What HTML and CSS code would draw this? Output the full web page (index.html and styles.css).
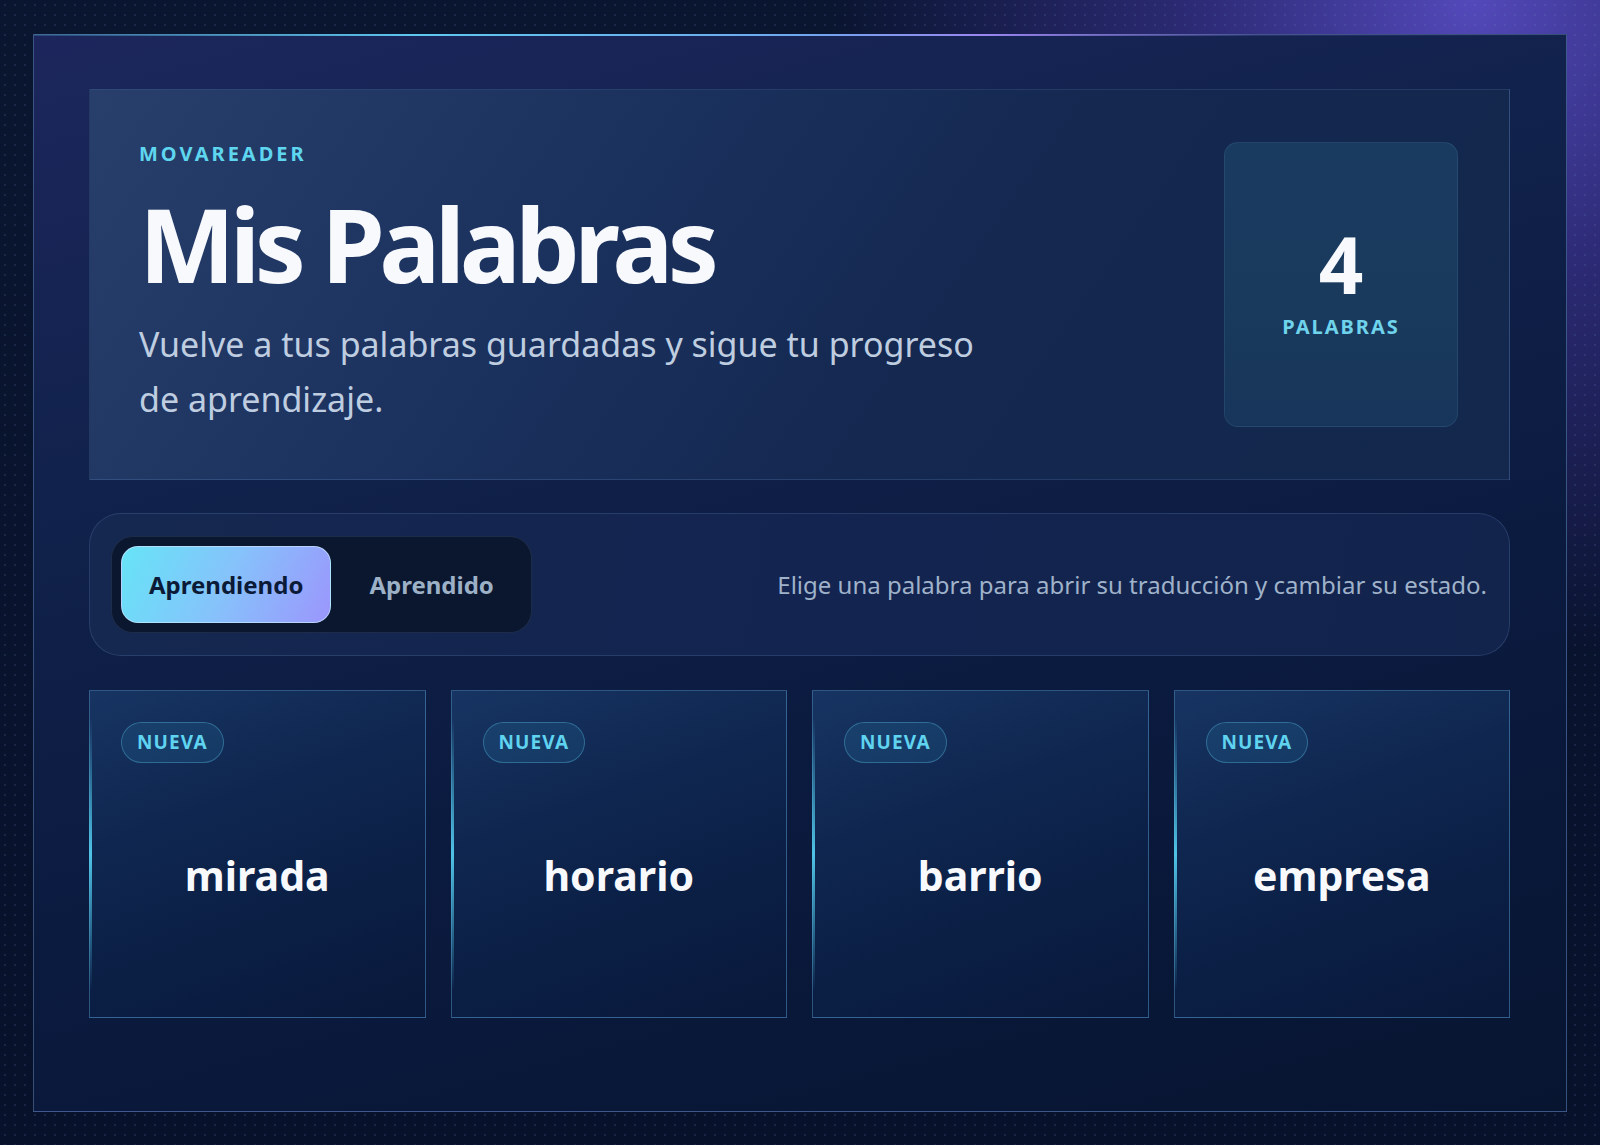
FILE: index.html
```html
<!DOCTYPE html>
<html lang="es">
<head>
    <meta charset="UTF-8">
    <meta name="viewport" content="width=device-width, initial-scale=1.0">
    <title>Mis Palabras - MovaReader</title>
    <link rel="stylesheet" href="styles.css">
</head>
<body>
    <div class="shell">
        <section class="hero">
            <div class="hero-text">
                <div class="eyebrow">MOVAREADER</div>
                <h1>Mis Palabras</h1>
                <p class="lead">Vuelve a tus palabras guardadas y sigue tu progreso de aprendizaje.</p>
            </div>
            <div class="stat-box">
                <div class="stat-num">4</div>
                <div class="stat-label">PALABRAS</div>
            </div>
        </section>

        <section class="toolbar">
            <div class="tabs">
                <button class="tab active">Aprendiendo</button>
                <button class="tab">Aprendido</button>
            </div>
            <p class="hint">Elige una palabra para abrir su traducción y cambiar su estado.</p>
        </section>

        <section class="cards">
            <div class="card">
                <span class="badge">NUEVA</span>
                <div class="word">mirada</div>
            </div>
            <div class="card">
                <span class="badge">NUEVA</span>
                <div class="word">horario</div>
            </div>
            <div class="card">
                <span class="badge">NUEVA</span>
                <div class="word">barrio</div>
            </div>
            <div class="card">
                <span class="badge">NUEVA</span>
                <div class="word">empresa</div>
            </div>
        </section>
    </div>
</body>
</html>
```

FILE: styles.css
```css
* {
    box-sizing: border-box;
}
html, body {
    height: 100%;
}
body {
    margin: 0;
    padding: 34px 33px 33px;
    font-family: "Noto Sans", "Open Sans", sans-serif;
    color: #f4f7fc;
    background-color: #071129;
    background-image:
        radial-gradient(circle, rgba(110, 140, 200, 0.16) 1px, transparent 1.6px),
        radial-gradient(ellipse 40% 58% at 92% 0%, rgba(96, 82, 210, 0.85), rgba(75, 62, 180, 0.5) 45%, transparent 100%),
        linear-gradient(180deg, #0a1530 0%, #07112a 100%);
    background-size: 10px 10px, 100% 100%, 100% 100%;
}
.shell {
    position: relative;
    min-height: calc(100vh - 67px);
    padding: 54px 56px 60px 55px;
    display: flex;
    flex-direction: column;
    gap: 33px;
    border: 1px solid rgba(110, 150, 205, 0.45);
    background: linear-gradient(165deg, #1c265c 0%, #11224c 30%, #0b1b40 60%, #071531 100%);
}
.shell::before {
    content: "";
    position: absolute;
    top: -1px;
    left: 0;
    right: 0;
    height: 2px;
    background: linear-gradient(90deg, rgba(90, 200, 240, 0.2) 0%, #5fc8ee 25%, #6fa8ee 50%, #9a86f0 62%, rgba(120, 110, 220, 0.2) 80%, transparent 100%);
}

/* hero */
.hero {
    display: flex;
    justify-content: space-between;
    padding: 52px 51px 52px 49px;
    border: 1px solid rgba(110, 150, 205, 0.18);
    background: linear-gradient(125deg, #283f6c 0%, #1c3360 30%, #142850 60%, #13284c 100%);
}
.hero-text {
    display: flex;
    flex-direction: column;
}
.eyebrow {
    font-size: 20px;
    line-height: 24px;
    font-weight: 700;
    letter-spacing: 0.15em;
    color: #5fd6ef;
}
h1 {
    margin: 21px 0 0;
    font-size: 102px;
    line-height: 114px;
    font-weight: 700;
    letter-spacing: -0.054em;
    color: #f7f9fd;
}
.lead {
    margin: 16px 0 0;
    max-width: 850px;
    font-size: 34px;
    line-height: 55px;
    color: #bfcde0;
}
.stat-box {
    width: 234px;
    display: flex;
    flex-direction: column;
    align-items: center;
    justify-content: center;
    padding-bottom: 4px;
    border-radius: 14px;
    border: 1px solid rgba(120, 180, 220, 0.12);
    background: linear-gradient(180deg, #1a3b60 0%, #193a5c 60%, #17355a 100%);
}
.stat-num {
    font-size: 78px;
    line-height: 76px;
    font-weight: 700;
    color: #f7f9fd;
}
.stat-label {
    margin-top: 13px;
    font-size: 20px;
    line-height: 24px;
    font-weight: 700;
    letter-spacing: 0.1em;
    color: #6fd3ec;
}

/* toolbar */
.toolbar {
    display: flex;
    align-items: center;
    justify-content: space-between;
    padding: 22px 22px 22px 21px;
    border-radius: 32px;
    border: 1px solid rgba(120, 160, 210, 0.2);
    background: linear-gradient(100deg, #15284f 0%, #132450 50%, #12234c 100%);
}
.tabs {
    display: flex;
    gap: 10px;
    padding: 9px;
    border-radius: 22px;
    border: 1px solid rgba(120, 160, 210, 0.16);
    background: #0b162f;
}
.tab {
    height: 77px;
    padding: 0 27px;
    border: 1px solid transparent;
    border-radius: 17px;
    background: transparent;
    font-family: inherit;
    font-size: 24px;
    font-weight: 700;
    color: #9cb0c6;
}
.tab.active {
    color: #0b1a36;
    border-color: rgba(200, 230, 255, 0.7);
    background: linear-gradient(115deg, #66e4f7 0%, #86c2fb 50%, #9b96fc 100%);
}
.hint {
    margin: 0;
    font-size: 24px;
    color: #9fb2c9;
}

/* cards */
.cards {
    display: grid;
    grid-template-columns: repeat(4, 1fr);
    gap: 25px;
    margin-top: 1px;
}
.card {
    position: relative;
    height: 328px;
    padding: 31px;
    display: flex;
    flex-direction: column;
    align-items: flex-start;
    border: 1px solid rgba(90, 160, 210, 0.45);
    background: linear-gradient(160deg, #173462 0%, #0f2750 35%, #0b1f45 65%, #08183a 100%);
}
.card::before {
    content: "";
    position: absolute;
    left: -1px;
    top: 8%;
    bottom: 8%;
    width: 3px;
    background: linear-gradient(180deg, transparent, #4fc3e6 50%, transparent);
}
.badge {
    padding: 8px 15px;
    line-height: 23px;
    border-radius: 999px;
    border: 1px solid rgba(95, 200, 235, 0.35);
    background: rgba(60, 170, 220, 0.12);
    font-size: 19px;
    font-weight: 700;
    letter-spacing: 0.06em;
    color: #5fd3ef;
}
.word {
    flex: 1;
    align-self: stretch;
    display: flex;
    align-items: center;
    justify-content: center;
    font-size: 41px;
    font-weight: 700;
    color: #f7f9fd;
}
```
